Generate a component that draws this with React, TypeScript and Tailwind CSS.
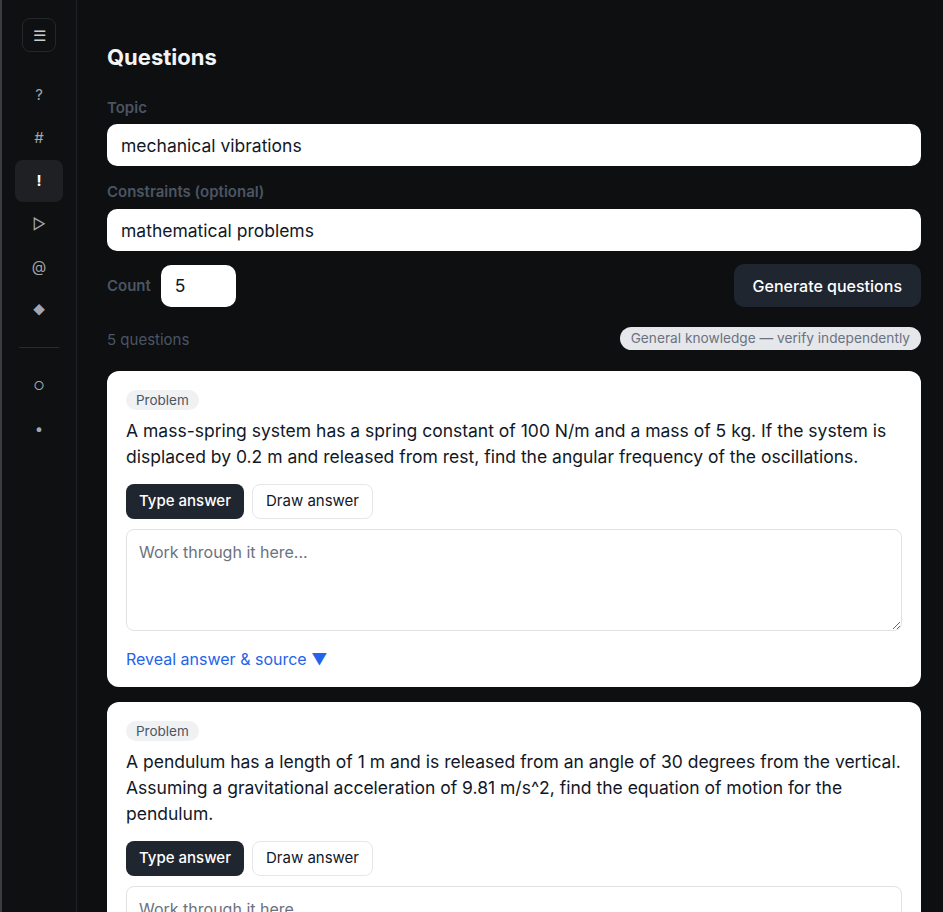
import { useState } from 'react';

const NAV = [
  { key: 'help', glyph: '?' },
  { key: 'tags', glyph: '#' },
  { key: 'questions', glyph: '!' },
  { key: 'play', glyph: '▷' },
  { key: 'mail', glyph: '@' },
  { key: 'gem', glyph: '◆', small: true },
];

const QUESTIONS = [
  {
    id: 1,
    kind: 'Problem',
    text: 'A mass-spring system has a spring constant of 100 N/m and a mass of 5 kg. If the system is displaced by 0.2 m and released from rest, find the angular frequency of the oscillations.',
  },
  {
    id: 2,
    kind: 'Problem',
    text: 'A pendulum has a length of 1 m and is released from an angle of 30 degrees from the vertical. Assuming a gravitational acceleration of 9.81 m/s^2, find the equation of motion for the pendulum.',
  },
];

export default function App() {
  const [active, setActive] = useState('questions');
  const [topic, setTopic] = useState('mechanical vibrations');
  const [constraints, setConstraints] = useState('mathematical problems');
  const [count, setCount] = useState('5');

  return (
    <div className="flex h-[912px] overflow-hidden bg-[#0e0f11] font-['Inter',sans-serif] border-l-2 border-[#3a3b3e]">
      {/* Sidebar */}
      <aside className="w-[75px] shrink-0 border-r border-[#202125] bg-[#0f1012] flex flex-col items-center pt-[18px]">
        <button className="w-[34px] h-[34px] rounded-lg border border-[#26272b] text-[#c9cbd0] text-[15px] leading-none flex items-center justify-center">
          ☰
        </button>
        <nav className="mt-[22px] flex flex-col items-center gap-[1px]">
          {NAV.map(n => (
            <button
              key={n.key}
              onClick={() => setActive(n.key)}
              className={`w-12 h-[42px] rounded-lg flex items-center justify-center ${
                active === n.key ? 'bg-[#1f2024] text-white font-bold' : 'text-[#a3a6ad]'
              } ${n.small ? 'text-[12px]' : 'text-[15px]'}`}
            >
              {n.glyph}
            </button>
          ))}
        </nav>
        <div className="w-10 h-px bg-[#2a2b2f] my-[16px]" />
        <div className="flex flex-col items-center gap-[1px]">
          <button className="w-12 h-[42px] flex items-center justify-center text-[#a3a6ad] text-[12px] pt-[2px]">○</button>
          <button className="w-12 h-[42px] flex items-center justify-center text-[#a3a6ad] text-[15px] pt-[3px]">•</button>
        </div>
      </aside>

      {/* Main */}
      <main className="flex-1 pl-[30px] pr-[22px] pt-[42px]">
        <h1 className="text-[22px] leading-[30px] font-bold text-[#f3f4f6]">Questions</h1>

        <label className="block mt-[26px] text-[15px] leading-5 font-semibold text-[#4b5563]">Topic</label>
        <input
          value={topic}
          onChange={e => setTopic(e.target.value)}
          className="mt-[6px] w-full h-[42px] rounded-[10px] bg-white px-[14px] text-[17.5px] text-[#111827] outline-none"
        />

        <label className="block mt-[16px] text-[15px] leading-5 font-semibold text-[#4b5563]">Constraints (optional)</label>
        <input
          value={constraints}
          onChange={e => setConstraints(e.target.value)}
          className="mt-[7px] w-full h-[42px] rounded-[10px] bg-white px-[14px] text-[17.5px] text-[#111827] outline-none"
        />

        <div className="mt-[13px] flex items-center justify-between">
          <div className="flex items-center gap-[10px]">
            <span className="text-[15px] font-semibold text-[#4b5563] pt-[2px]">Count</span>
            <input
              value={count}
              onChange={e => setCount(e.target.value)}
              className="w-[75px] h-[42px] rounded-[10px] bg-white px-[14px] text-[17.5px] text-[#111827] outline-none"
            />
          </div>
          <button className="h-[43px] px-[19px] rounded-[10px] bg-[#1f2630] text-white text-[16px] font-medium">
            Generate questions
          </button>
        </div>

        <div className="mt-[20px] h-[23px] flex items-center justify-between">
          <span className="text-[15px] leading-5 text-[#4b5563] pt-[2px]">{QUESTIONS.length + 3} questions</span>
          <span className="h-[23px] px-[11px] rounded-full bg-[#e5e7eb] text-[13.7px] text-[#6b7280] flex items-center">
            General knowledge — verify independently
          </span>
        </div>

        <div className="mt-[21px] flex flex-col gap-[15px]">
          {QUESTIONS.map(q => (
            <QuestionCard key={q.id} kind={q.kind} text={q.text} />
          ))}
        </div>
      </main>
    </div>
  );
}

function QuestionCard({ kind, text }: { kind: string; text: string }) {
  const [mode, setMode] = useState<'type' | 'draw'>('type');

  return (
    <div className="rounded-xl bg-white px-[19px] pt-[19px] pb-[16px]">
      <span className="flex w-fit h-5 items-center rounded-full bg-[#f0f1f3] px-[10px] text-[13.5px] text-[#4b5563]">
        {kind}
      </span>
      <p className="mt-[8px] text-[17.5px] leading-[26px] text-[#111827]">{text}</p>

      <div className="mt-[14px] flex gap-2">
        <button
          onClick={() => setMode('type')}
          className={`h-[35px] px-[13px] rounded-lg text-[15px] ${
            mode === 'type' ? 'bg-[#1f2630] text-white font-medium' : 'border border-[#e5e7eb] text-[#111827]'
          }`}
        >
          Type answer
        </button>
        <button
          onClick={() => setMode('draw')}
          className={`h-[35px] px-[13px] rounded-lg text-[15px] ${
            mode === 'draw' ? 'bg-[#1f2630] text-white font-medium' : 'border border-[#e5e7eb] text-[#111827]'
          }`}
        >
          Draw answer
        </button>
      </div>

      <textarea
        placeholder="Work through it here..."
        className="mt-[10px] block w-full h-[102px] rounded-lg border border-[#e0e2e6] px-[12px] py-[10px] text-[16px] text-[#111827] placeholder:text-[#6b7280] outline-none"
      />

      <button className="mt-[16px] text-[16px] text-[#2563eb]">Reveal answer &amp; source ▼</button>
    </div>
  );
}
